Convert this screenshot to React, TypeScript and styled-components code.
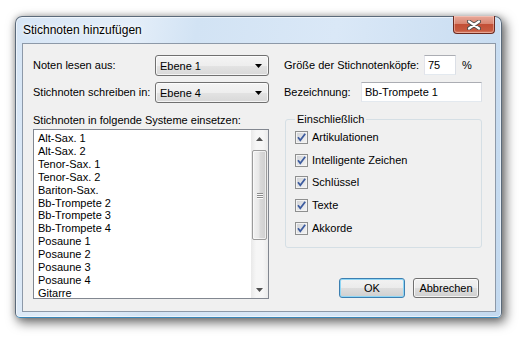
import React from 'react';
import styled, { createGlobalStyle } from 'styled-components';

const GlobalStyle = createGlobalStyle`
  html, body {
    margin: 0;
    padding: 0;
    background: #fff;
  }
  body {
    font-family: "Liberation Sans", Arial, sans-serif;
    font-size: 11px;
    color: #000;
  }
`;

const Stage = styled.div`
  width: 529px;
  height: 344px;
  padding: 16px 0 0 15px;
  box-sizing: border-box;
`;

const Window = styled.div`
  width: 487px;
  height: 302px;
  box-sizing: border-box;
  display: flex;
  flex-direction: column;
  border: 1px solid #5b6a7a;
  border-bottom-color: #3a86b8;
  border-radius: 7px 7px 5px 5px;
  background: linear-gradient(100deg, #d6e5f5 0%, #e4eef9 22%, #d2e3f4 34%, #dae8f7 60%, #c3d9ef 100%);
  box-shadow: inset 0 0 0 1px rgba(255, 255, 255, 0.55), 3px 4px 11px 1px rgba(0, 0, 0, 0.55),
    0 0 6px rgba(0, 0, 0, 0.18);
`;

const TitleBar = styled.div`
  height: 26px;
  display: flex;
  align-items: flex-start;
  justify-content: space-between;
`;

const TitleText = styled.div`
  padding-left: 7px;
  line-height: 26px;
  font-size: 12px;
  color: #000;
  text-shadow: 0 0 6px #fff, 0 0 3px #fff;
`;

const CloseButton = styled.div`
  width: 42px;
  height: 18px;
  margin: -1px 6px 0 0;
  box-sizing: border-box;
  display: flex;
  align-items: center;
  justify-content: center;
  border: 1px solid #6b2a20;
  border-top: none;
  border-radius: 0 0 4px 4px;
  background: linear-gradient(#e8a99a 0%, #d98672 45%, #c24f36 50%, #c75a3f 85%, #d9846c 100%);
  box-shadow: inset 0 0 0 1px rgba(255, 220, 210, 0.45);
`;

const Client = styled.div`
  margin: 0 5px 5px 6px;
  height: 269px;
  box-sizing: border-box;
  border: 1px solid #8d99a8;
  background: #f0f0f0;
  padding: 11px 0 0 10px;
  display: grid;
  grid-template-columns: 236px 198px;
  grid-template-rows: 21px 21px 1fr;
  column-gap: 15px;
  row-gap: 6px;
`;

const FieldRow = styled.div`
  display: flex;
  align-items: flex-start;
  height: 21px;
`;

const FieldLabel = styled.div<{ $width: number }>`
  width: ${(p) => p.$width}px;
  flex-shrink: 0;
  line-height: 21px;
  white-space: nowrap;
`;

const ComboBox = styled.div`
  width: 114px;
  height: 21px;
  box-sizing: border-box;
  display: flex;
  align-items: center;
  justify-content: space-between;
  padding: 0 6px 0 4px;
  border: 1px solid #707070;
  border-radius: 3px;
  background: linear-gradient(#f4f4f4 0%, #eeeeee 50%, #e3e3e3 52%, #d8d8d8 100%);
  box-shadow: inset 0 0 0 1px rgba(255, 255, 255, 0.7);
`;

const TextBox = styled.div<{ $width: number }>`
  width: ${(p) => p.$width}px;
  height: 20px;
  box-sizing: border-box;
  padding-left: 3px;
  line-height: 18px;
  background: #fff;
  border: 1px solid;
  border-color: #abadb3 #dbdfe6 #e3e9ef #e2e3ea;
`;

const Unit = styled.div`
  margin-left: 6px;
  line-height: 21px;
`;

const Pane = styled.div`
  display: flex;
  flex-direction: column;
  align-items: flex-start;
`;

const Caption = styled.div`
  margin-top: 5px;
  line-height: 13px;
  white-space: nowrap;
`;

const ListBox = styled.div`
  margin-top: 2px;
  width: 236px;
  height: 170px;
  box-sizing: border-box;
  border: 1px solid #828790;
  background: #fff;
  display: flex;
`;

const ListItems = styled.div`
  flex: 1;
  overflow: hidden;
  padding: 2px 0 0 4px;
`;

const ListItem = styled.div`
  line-height: 12.9px;
  white-space: nowrap;
`;

const ScrollBar = styled.div`
  width: 17px;
  display: flex;
  flex-direction: column;
  align-items: center;
  background: linear-gradient(90deg, #e9e9e9 0%, #f6f6f6 30%, #f6f6f6 70%, #ebebeb 100%);
`;

const ScrollArrow = styled.div`
  width: 17px;
  height: 17px;
  flex-shrink: 0;
  display: flex;
  align-items: center;
  justify-content: center;
`;

const ScrollThumb = styled.div`
  width: 15px;
  height: 90px;
  margin-top: 3px;
  box-sizing: border-box;
  border: 1px solid #9b9b9b;
  border-radius: 2px;
  background: linear-gradient(90deg, #f2f2f2 0%, #e8e8e8 45%, #d9d9d9 55%, #cfcfcf 100%);
  box-shadow: inset 0 0 0 1px rgba(255, 255, 255, 0.6);
  display: flex;
  flex-direction: column;
  align-items: center;
  justify-content: center;
  gap: 1px;
`;

const Grip = styled.div`
  width: 6px;
  height: 1px;
  background: #8c8c8c;
  box-shadow: 0 1px 0 #fafafa;
`;

const Spacer = styled.div`
  flex: 1;
`;

const GroupBox = styled.fieldset`
  width: 197px;
  min-width: 0;
  box-sizing: border-box;
  margin: 4px 0 0 1px;
  padding: 5px 9px 12px 9px;
  border: 1px solid #d5dfe5;
  border-radius: 3px;
  display: flex;
  flex-direction: column;
  gap: 9.65px;
`;

const GroupLegend = styled.legend`
  padding: 0 2px;
  line-height: 13px;
`;

const CheckRow = styled.div`
  display: flex;
  align-items: center;
  gap: 4px;
  height: 13px;
  line-height: 13px;
  white-space: nowrap;
`;

const ButtonRow = styled.div`
  align-self: stretch;
  display: flex;
  justify-content: flex-end;
  gap: 8px;
  margin-top: 30px;
  padding-right: 3px;
`;

const PushButton = styled.div<{ $default?: boolean }>`
  width: 66px;
  height: 20px;
  box-sizing: border-box;
  display: flex;
  align-items: center;
  justify-content: center;
  border: 1px solid ${(p) => (p.$default ? '#3c7fb1' : '#707070')};
  border-radius: 3px;
  background: linear-gradient(#f2f2f2 0%, #ebebeb 50%, #dddddd 52%, #cfcfcf 100%);
  box-shadow: inset 0 0 0 1px ${(p) => (p.$default ? '#8fd6f5' : 'rgba(255, 255, 255, 0.75)')};
`;

const instruments = [
  'Alt-Sax. 1',
  'Alt-Sax. 2',
  'Tenor-Sax. 1',
  'Tenor-Sax. 2',
  'Bariton-Sax.',
  'Bb-Trompete 2',
  'Bb-Trompete 3',
  'Bb-Trompete 4',
  'Posaune 1',
  'Posaune 2',
  'Posaune 3',
  'Posaune 4',
  'Gitarre',
];

const includes = ['Artikulationen', 'Intelligente Zeichen', 'Schlüssel', 'Texte', 'Akkorde'];

const CloseGlyph = () => (
  <svg width="14" height="10" viewBox="0 0 14 10">
    <path d="M2 1.5 L12 8.5 M12 1.5 L2 8.5" stroke="#4a4a4a" strokeWidth="4" strokeLinecap="round" />
    <path d="M2 1.5 L12 8.5 M12 1.5 L2 8.5" stroke="#fff" strokeWidth="2.2" strokeLinecap="round" />
  </svg>
);

const DownTriangle = ({ color = '#000' }: { color?: string }) => (
  <svg width="7" height="4" viewBox="0 0 7 4">
    <path d="M0 0 H7 L3.5 4 Z" fill={color} />
  </svg>
);

const UpTriangle = ({ color }: { color: string }) => (
  <svg width="7" height="4" viewBox="0 0 7 4">
    <path d="M3.5 0 L7 4 H0 Z" fill={color} />
  </svg>
);

const CheckBox = () => (
  <svg width="13" height="13" viewBox="0 0 13 13">
    <defs>
      <linearGradient id="cbfill" x1="0" y1="0" x2="1" y2="1">
        <stop offset="0" stopColor="#d2d4d8" />
        <stop offset="1" stopColor="#f2f2f2" />
      </linearGradient>
    </defs>
    <rect x="0.5" y="0.5" width="12" height="12" fill="#f3f3f3" stroke="#8e8f8f" />
    <rect x="2" y="2" width="9" height="9" fill="url(#cbfill)" />
    <path d="M3 6.2 L5.3 9.2 L10.2 2.8" fill="none" stroke="#3d5c9f" strokeWidth="1.8" />
  </svg>
);

export default function App() {
  return (
    <Stage>
      <GlobalStyle />
      <Window>
        <TitleBar>
          <TitleText>Stichnoten hinzufügen</TitleText>
          <CloseButton>
            <CloseGlyph />
          </CloseButton>
        </TitleBar>
        <Client>
          <FieldRow>
            <FieldLabel $width={122}>Noten lesen aus:</FieldLabel>
            <ComboBox>
              Ebene 1
              <DownTriangle />
            </ComboBox>
          </FieldRow>
          <FieldRow>
            <FieldLabel $width={140}>Größe der Stichnotenköpfe:</FieldLabel>
            <TextBox $width={32}>75</TextBox>
            <Unit>%</Unit>
          </FieldRow>
          <FieldRow>
            <FieldLabel $width={122}>Stichnoten schreiben in:</FieldLabel>
            <ComboBox>
              Ebene 4
              <DownTriangle />
            </ComboBox>
          </FieldRow>
          <FieldRow>
            <FieldLabel $width={77}>Bezeichnung:</FieldLabel>
            <TextBox $width={121}>Bb-Trompete 1</TextBox>
          </FieldRow>
          <Pane>
            <Caption>Stichnoten in folgende Systeme einsetzen:</Caption>
            <ListBox>
              <ListItems>
                {instruments.map((name) => (
                  <ListItem key={name}>{name}</ListItem>
                ))}
              </ListItems>
              <ScrollBar>
                <ScrollArrow>
                  <UpTriangle color="#505050" />
                </ScrollArrow>
                <ScrollThumb>
                  <Grip />
                  <Grip />
                  <Grip />
                </ScrollThumb>
                <Spacer />
                <ScrollArrow>
                  <DownTriangle color="#505050" />
                </ScrollArrow>
              </ScrollBar>
            </ListBox>
          </Pane>
          <Pane>
            <GroupBox>
              <GroupLegend>Einschließlich</GroupLegend>
              {includes.map((item) => (
                <CheckRow key={item}>
                  <CheckBox />
                  {item}
                </CheckRow>
              ))}
            </GroupBox>
            <ButtonRow>
              <PushButton $default>OK</PushButton>
              <PushButton>Abbrechen</PushButton>
            </ButtonRow>
          </Pane>
        </Client>
      </Window>
    </Stage>
  );
}
